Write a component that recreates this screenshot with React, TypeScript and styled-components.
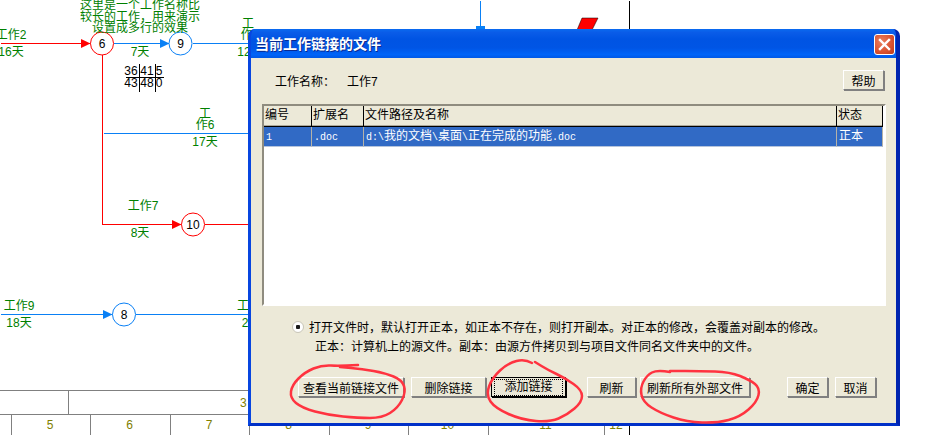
import styled, { createGlobalStyle } from 'styled-components';

const FONT = '"Liberation Sans", "Noto Sans CJK SC", sans-serif';

const GlobalStyle = createGlobalStyle`
  html, body {
    margin: 0;
    padding: 0;
    background: #fff;
    overflow: hidden;
  }
`;

const Page = styled.div`
  position: relative;
  width: 932px;
  height: 435px;
  overflow: hidden;
  background: #fff;
  font-family: ${FONT};
  font-size: 12px;
`;

const Diagram = styled.svg`
  position: absolute;
  left: 0;
  top: 0;
`;

const Label = styled.text<{ $kind?: 'green' | 'black' }>`
  font-family: ${FONT};
  font-size: 12px;
  text-anchor: middle;
  fill: ${({ $kind }) => ($kind === 'black' ? '#000' : '#008000')};
`;

/* time scale under the diagram */
const Ruler = styled.div`
  position: absolute;
  left: 0;
  top: 390px;
  width: 630px;
  display: flex;
  flex-direction: column;
  color: #808000;
  border-right: 1px solid #000;
  box-sizing: border-box;
`;

const RulerRow = styled.div<{ $height: number }>`
  display: flex;
  height: ${({ $height }) => $height}px;
  border-top: 1px solid #808080;
  box-sizing: border-box;
`;

const RulerCell = styled.div<{ $width: number }>`
  width: ${({ $width }) => $width}px;
  flex: none;
  box-sizing: border-box;
  padding-right: 2px;
  border-right: 1px solid #808080;
  display: flex;
  align-items: center;
  justify-content: center;
  &:last-child {
    border-right: none;
  }
`;

const RulerSpan = styled(RulerCell)`
  justify-content: flex-start;
  padding-left: 171px;
`;

/* dialog */
const Dialog = styled.div`
  position: absolute;
  left: 248px;
  top: 29px;
  width: 652px;
  height: 397px;
  box-sizing: border-box;
  display: flex;
  flex-direction: column;
  border-radius: 7px 7px 0 0;
  background: #0831d9;
  overflow: hidden;
  border-left: 3px solid #0846e0;
  border-right: 4px solid #0024b0;
  border-bottom: 3px solid #0030c8;
`;

const TitleBar = styled.div`
  height: 29px;
  flex: none;
  margin: 0 -4px 0 -3px;
  padding: 0 5px 0 7px;
  display: flex;
  align-items: center;
  justify-content: space-between;
  background: linear-gradient(
    180deg,
    #0a6af0 0%,
    #0a5ce8 12%,
    #0054e3 35%,
    #0055e5 65%,
    #0064f8 88%,
    #0058e6 100%
  );
`;

const Title = styled.div`
  color: #fff;
  font-size: 14px;
  font-weight: 700;
  margin-bottom: 2px;
  text-shadow: 1px 1px 0 #0a2a90;
`;

const CloseButton = styled.button`
  width: 21px;
  height: 21px;
  padding: 0;
  margin-top: 2px;
  border: 1px solid #fff;
  border-radius: 3px;
  background: radial-gradient(circle at 35% 35%, #e9805f 0%, #d9512f 60%, #b83a1c 100%);
  display: flex;
  align-items: center;
  justify-content: center;
`;

const DialogBody = styled.div`
  flex: 1;
  background: #ece9d8;
  display: flex;
  flex-direction: column;
  padding-top: 12px;
  color: #000;
`;

const NameRow = styled.div`
  display: flex;
  align-items: center;
  padding: 0 12px 0 24px;
  height: 20px;
`;

const NameLabel = styled.span`
  width: 72px;
`;

const NameValue = styled.span`
  flex: 1;
`;

const Button = styled.button<{ $width: number; $left?: number; $focused?: boolean }>`
  width: ${({ $width }) => $width}px;
  height: 20px;
  margin-left: ${({ $left }) => $left ?? 0}px;
  padding: 0;
  flex: none;
  box-sizing: border-box;
  background: #ece9d8;
  color: #000;
  font-family: ${FONT};
  font-size: 12px;
  border: 1px solid;
  border-color: ${({ $focused }) => ($focused ? '#000' : '#fff #808080 #808080 #fff')};
  box-shadow: ${({ $focused }) => ($focused ? '1px 1px 0 #000' : '1px 1px 0 #808080')};
  display: flex;
  align-items: center;
  justify-content: center;
`;

const FocusRing = styled.span`
  border: 1px dotted #000;
  padding: 1px 9px;
  line-height: 13px;
`;

const Table = styled.div`
  height: 202px;
  margin: 14px 10px 0 11px;
  box-sizing: border-box;
  background: #fff;
  border: 2px solid;
  border-color: #8f8c7f #fff #fff #8f8c7f;
`;

const TableRow = styled.div`
  display: grid;
  grid-template-columns: 48px 52px 473px 46px;
`;

const HeaderCell = styled.div`
  height: 21px;
  box-sizing: border-box;
  background: #ece9d8;
  padding-left: 1px;
  line-height: 19px;
  border-right: 1px solid #000;
  border-bottom: 1px solid #000;
  box-shadow: inset 0 -1px 0 #aca899;
`;

const Cell = styled.div`
  height: 20px;
  box-sizing: border-box;
  background: #316ac5;
  color: #fff;
  padding-left: 2px;
  line-height: 18px;
  border-right: 1px solid #b5b2a8;
  border-bottom: 1px solid #b5c4dc;
  white-space: nowrap;
`;

const Mono = styled.span`
  font-family: "Liberation Mono", monospace;
  font-size: 10px;
`;

const Note = styled.div`
  display: flex;
  flex-direction: column;
  gap: 6px;
  margin-top: 14px;
  padding-left: 41px;
`;

const NoteLine = styled.div<{ $indent?: number }>`
  display: flex;
  align-items: center;
  height: 13px;
  padding-left: ${({ $indent }) => $indent ?? 0}px;
  white-space: nowrap;
`;

const Radio = styled.span`
  width: 12px;
  height: 12px;
  margin-right: 5px;
  box-sizing: border-box;
  flex: none;
  border-radius: 50%;
  background: radial-gradient(circle, #1a1a1a 0 2px, #fff 2.5px);
  border: 1px solid #c9c6b8;
`;

const ButtonRow = styled.div`
  display: flex;
  margin-top: 25px;
  padding-left: 47px;
`;

const Scribbles = styled.svg`
  position: absolute;
  left: 0;
  top: 0;
  pointer-events: none;
`;

const Scribble = styled.path`
  fill: none;
  stroke: #ff3340;
  stroke-width: 2.5;
  stroke-linecap: round;
  stroke-linejoin: round;
`;

const RED = '#ff0000';
const BLUE = '#0a80f5';

const lines = [
  { x1: 0, y1: 43, x2: 90, y2: 43, color: RED },
  { x1: 113, y1: 43, x2: 169, y2: 43, color: BLUE },
  { x1: 192, y1: 43, x2: 250, y2: 43, color: BLUE },
  { x1: 102, y1: 54, x2: 102, y2: 224, color: RED },
  { x1: 103, y1: 133, x2: 250, y2: 133, color: BLUE },
  { x1: 102, y1: 224, x2: 181, y2: 224, color: RED },
  { x1: 204, y1: 224, x2: 250, y2: 224, color: RED },
  { x1: 0, y1: 314, x2: 112, y2: 314, color: BLUE },
  { x1: 135, y1: 314, x2: 250, y2: 314, color: BLUE },
  { x1: 480, y1: 0, x2: 480, y2: 30, color: BLUE },
  { x1: 629, y1: 0, x2: 629, y2: 30, color: '#000' },
  // little schedule cross
  { x1: 125, y1: 77, x2: 163, y2: 77, color: '#000' },
  { x1: 139, y1: 63, x2: 139, y2: 91, color: '#000' },
  { x1: 155, y1: 63, x2: 155, y2: 91, color: '#000' },
];

const arrows = [
  { points: '81,39 90.5,43.5 81,48', color: RED },
  { points: '160,39 169.5,43.5 160,48', color: BLUE },
  { points: '172,220 181.5,224.5 172,229', color: RED },
  { points: '103,310 112.5,314.5 103,319', color: BLUE },
  { points: '476,26 485,26 485,30 476,30', color: BLUE },
];

const nodes = [
  { id: '6', x: 102, y: 43, color: RED },
  { id: '9', x: 180.5, y: 43, color: BLUE },
  { id: '10', x: 193, y: 224, color: RED },
  { id: '8', x: 124, y: 314, color: BLUE },
];

const labels = [
  { text: '这里是一个工作名称比', x: 140, y: 9 },
  { text: '较长的工作，用来演示', x: 140, y: 21 },
  { text: '设置成多行的效果', x: 140, y: 32 },
  { text: '工作2', x: 11, y: 39 },
  { text: '16天', x: 11, y: 56 },
  { text: '7天', x: 140, y: 56 },
  { text: '工', x: 248, y: 28 },
  { text: '作1', x: 250, y: 39 },
  { text: '12', x: 244, y: 56 },
  { text: '工', x: 205, y: 118 },
  { text: '作6', x: 205, y: 129 },
  { text: '17天', x: 205, y: 146 },
  { text: '工作7', x: 143, y: 210 },
  { text: '8天', x: 140, y: 237 },
  { text: '工作9', x: 19, y: 310 },
  { text: '18天', x: 19, y: 327 },
  { text: '工', x: 243, y: 310 },
  { text: '2', x: 245, y: 327 },
];

const floatTable = [
  { text: '36', x: 131, y: 75 },
  { text: '41', x: 147, y: 75 },
  { text: '5', x: 159, y: 75 },
  { text: '43', x: 131, y: 87 },
  { text: '48', x: 147, y: 87 },
  { text: '0', x: 159, y: 87 },
];

const scale = [
  { w: 12, t: '' },
  { w: 79, t: '5' },
  { w: 80, t: '6' },
  { w: 79, t: '7' },
  { w: 80, t: '8' },
  { w: 79, t: '9' },
  { w: 80, t: '10' },
  { w: 116, t: '11' },
  { w: 24, t: '12' },
];

const scribbles: number[][][] = [
  [[358, 365], [340, 366], [322, 365], [305, 372], [292, 385], [290, 398], [302, 408], [328, 415], [358, 418], [382, 418], [398, 408], [406, 392], [402, 380], [385, 373], [362, 369], [340, 367]],
  [[532, 363], [525, 359], [508, 363], [492, 378], [486, 395], [495, 408], [522, 420], [550, 422], [567, 415], [582, 402], [582, 390], [565, 378], [548, 370], [535, 362]],
  [[670, 372], [657, 370], [647, 375], [640, 388], [643, 402], [660, 413], [687, 422], [717, 423], [740, 417], [757, 402], [760, 388], [750, 380], [730, 372], [700, 371], [670, 371]],
];

const smooth = (pts: number[][]) => {
  let d = `M${pts[0][0]} ${pts[0][1]}`;
  for (let i = 1; i < pts.length - 1; i++) {
    const mx = (pts[i][0] + pts[i + 1][0]) / 2;
    const my = (pts[i][1] + pts[i + 1][1]) / 2;
    d += ` Q${pts[i][0]} ${pts[i][1]} ${mx} ${my}`;
  }
  const last = pts[pts.length - 1];
  return `${d} L${last[0]} ${last[1]}`;
};

const App = () => (
  <Page>
    <GlobalStyle />
    <Diagram width={932} height={435}>
      {lines.map((l, i) => (
        <line
          key={i}
          x1={l.x1 + 0.5}
          y1={l.y1 + 0.5}
          x2={l.x2 + 0.5}
          y2={l.y2 + 0.5}
          stroke={l.color}
          shapeRendering="crispEdges"
        />
      ))}
      {arrows.map((a, i) => (
        <polygon key={i} points={a.points} fill={a.color} />
      ))}
      <polygon points="582,18 598,18 592,30 577,30" fill="#ff0000" stroke="#000" strokeWidth={0.5} />
      {nodes.map((n) => (
        <g key={n.id}>
          <circle cx={n.x} cy={n.y + 0.5} r={11.5} fill="#fff" stroke={n.color} />
          <Label $kind="black" x={n.x} y={n.y + 5}>
            {n.id}
          </Label>
        </g>
      ))}
      {labels.map((l, i) => (
        <Label key={i} x={l.x} y={l.y}>
          {l.text}
        </Label>
      ))}
      {floatTable.map((l, i) => (
        <Label key={i} $kind="black" x={l.x} y={l.y}>
          {l.text}
        </Label>
      ))}
    </Diagram>

    <Ruler>
      <RulerRow $height={24}>
        <RulerCell $width={69} />
        <RulerSpan $width={560}>3</RulerSpan>
      </RulerRow>
      <RulerRow $height={21}>
        {scale.map((c, i) => (
          <RulerCell key={i} $width={c.w}>
            {c.t}
          </RulerCell>
        ))}
      </RulerRow>
    </Ruler>

    <Dialog>
      <TitleBar>
        <Title>当前工作链接的文件</Title>
        <CloseButton aria-label="关闭">
          <svg width="13" height="13" viewBox="0 0 13 13">
            <path d="M2 2 L11 11 M11 2 L2 11" stroke="#fff" strokeWidth="2.4" strokeLinecap="square" />
          </svg>
        </CloseButton>
      </TitleBar>
      <DialogBody>
        <NameRow>
          <NameLabel>工作名称：</NameLabel>
          <NameValue>工作7</NameValue>
          <Button $width={41}>帮助</Button>
        </NameRow>
        <Table>
          <TableRow>
            <HeaderCell>编号</HeaderCell>
            <HeaderCell>扩展名</HeaderCell>
            <HeaderCell>文件路径及名称</HeaderCell>
            <HeaderCell>状态</HeaderCell>
          </TableRow>
          <TableRow>
            <Cell>
              <Mono>1</Mono>
            </Cell>
            <Cell>
              <Mono>.doc</Mono>
            </Cell>
            <Cell>
              <Mono>d:\</Mono>我的文档<Mono>\</Mono>桌面<Mono>\</Mono>正在完成的功能<Mono>.doc</Mono>
            </Cell>
            <Cell>正本</Cell>
          </TableRow>
        </Table>
        <Note>
          <NoteLine>
            <Radio />
            打开文件时，默认打开正本，如正本不存在，则打开副本。对正本的修改，会覆盖对副本的修改。
          </NoteLine>
          <NoteLine $indent={23}>正本：计算机上的源文件。副本：由源方件拷贝到与项目文件同名文件夹中的文件。</NoteLine>
        </Note>
        <ButtonRow>
          <Button $width={106}>查看当前链接文件</Button>
          <Button $width={75} $left={7}>删除链接</Button>
          <Button $width={75} $left={5} $focused>
            <FocusRing>添加链接</FocusRing>
          </Button>
          <Button $width={49} $left={21}>刷新</Button>
          <Button $width={110} $left={4}>刷新所有外部文件</Button>
          <Button $width={41} $left={37}>确定</Button>
          <Button $width={41} $left={7}>取消</Button>
        </ButtonRow>
      </DialogBody>
    </Dialog>

    <Scribbles width={932} height={435}>
      {scribbles.map((pts, i) => (
        <Scribble key={i} d={smooth(pts)} />
      ))}
    </Scribbles>
  </Page>
);

export default App;
